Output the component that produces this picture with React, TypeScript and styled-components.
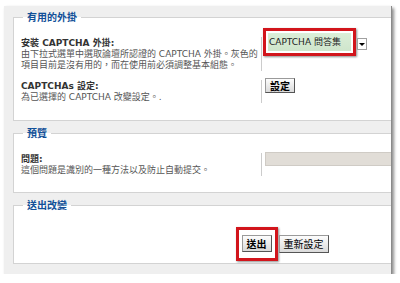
import React from 'react';
import styled, { createGlobalStyle } from 'styled-components';

const Global = createGlobalStyle`
  html, body { margin: 0; padding: 0; background: #fff; }
  body { font-family: "DejaVu Sans", "Noto Sans CJK TC", sans-serif; }
`;

const Frame = styled.div`
  box-sizing: border-box;
  margin: 6px 0 0 4px;
  width: 388px;
  height: 268px;
  padding-top: 5px;
  background: #efefef;
  border-right: 1px solid #8a8a8a;
  box-shadow: 2px 2px 3px rgba(0, 0, 0, 0.45);
  overflow: hidden;
`;

const Set = styled.fieldset<{ $pad: string }>`
  box-sizing: border-box;
  width: 538px;
  min-inline-size: 0;
  margin: 0 0 6px 9px;
  padding: ${p => p.$pad};
  border: 1px solid #d3d3d3;
  background: #fff;
`;

const Legend = styled.legend`
  margin-left: 2px;
  padding: 0 4px;
  font: bold 10px/12px "Noto Sans CJK TC", sans-serif;
  color: #115098;
`;

const Row = styled.div<{ $mt?: number }>`
  display: grid;
  grid-template-columns: 241px 1fr;
  align-items: start;
  padding: 4px 0;
  margin-top: ${p => p.$mt ?? 0}px;
`;

const Term = styled.div`
  box-sizing: border-box;
  border-right: 1px solid #cccccc;
`;

const Label = styled.div`
  font: bold 9px/12px "DejaVu Sans", "Noto Sans CJK TC", sans-serif;
  color: #333;
  white-space: nowrap;
`;

const Desc = styled.div`
  font: 9px/11px "DejaVu Sans", "Noto Sans CJK TC", sans-serif;
  color: #555;
  white-space: nowrap;
`;

const Def = styled.div`
  padding-left: 3px;
`;

const SelectWrap = styled.div`
  display: flex;
  align-items: flex-start;
  margin: -9px 0 0 -2px;
`;

const Mark = styled.div<{ $pad: string }>`
  display: inline-block;
  border: 3px solid #d2151c;
  padding: ${p => p.$pad};
  box-shadow: 1px 1px 2px rgba(0, 0, 0, 0.45);
`;

const Choice = styled.div`
  box-sizing: border-box;
  width: 83px;
  height: 18px;
  padding-left: 1px;
  background: linear-gradient(#dbeed8, #cfe5cc);
  font: 9px/18px "DejaVu Sans", "Noto Sans CJK TC", sans-serif;
  color: #222;
  white-space: nowrap;
`;

const Arrow = styled.div`
  box-sizing: border-box;
  width: 10px;
  height: 12px;
  margin: 10px 0 0 1px;
  border: 1px solid #a0a0a0;
  background: #fff;
  display: flex;
  align-items: center;
  justify-content: center;
  &::after {
    content: "";
    border-left: 3px solid transparent;
    border-right: 3px solid transparent;
    border-top: 3px solid #000;
  }
`;

const Btn = styled.button<{ $bold?: boolean; $h: number; $mt?: number }>`
  box-sizing: border-box;
  height: ${p => p.$h}px;
  margin: ${p => p.$mt ?? 0}px 0 0 0;
  padding: 0 4px;
  font: ${p => (p.$bold ? 'bold' : 'normal')} 10px/1 "Noto Sans CJK TC", sans-serif;
  color: #000;
  border: 1px solid;
  border-color: #9a9a9a #555 #555 #9a9a9a;
  background: linear-gradient(#fdfdfd, #dadada);
  display: block;
`;

const Field = styled.input`
  box-sizing: border-box;
  display: block;
  width: 260px;
  height: 14px;
  margin-top: -1px;
  border: 1px solid #cfcbc5;
  background: #e1ddd7;
`;

const Actions = styled.div`
  display: flex;
  justify-content: center;
  align-items: center;
  gap: 1px;
`;

export default function App() {
  return (
    <>
      <Global />
      <Frame>
        <Set $pad="10px 7px 13px">
          <Legend>有用的外掛</Legend>
          <Row>
            <Term>
              <Label>安裝 CAPTCHA 外掛:</Label>
              <Desc>
                由下拉式選單中選取論壇所認證的 CAPTCHA 外掛。灰色的
                <br />
                項目目前是沒有用的，而在使用前必須調整基本組態。
              </Desc>
            </Term>
            <Def>
              <SelectWrap>
                <Mark $pad="2px">
                  <Choice>CAPTCHA 問答集</Choice>
                </Mark>
                <Arrow />
              </SelectWrap>
            </Def>
          </Row>
          <Row $mt={1}>
            <Term>
              <Label>CAPTCHAs 設定:</Label>
              <Desc>為已選擇的 CAPTCHA 改變設定。.</Desc>
            </Term>
            <Def>
              <Btn $bold $h={15} $mt={-2}>設定</Btn>
            </Def>
          </Row>
        </Set>
        <Set $pad="10px 7px 12px">
          <Legend>預覽</Legend>
          <Row>
            <Term>
              <Label>問題:</Label>
              <Desc>這個問題是識別的一種方法以及防止自動提交。</Desc>
            </Term>
            <Def>
              <Field readOnly />
            </Def>
          </Row>
        </Set>
        <Set $pad="16px 7px 2px">
          <Legend>送出改變</Legend>
          <Actions>
            <Mark $pad="5px 3px 6px">
              <Btn $bold $h={17}>送出</Btn>
            </Mark>
            <Btn $h={18}>重新設定</Btn>
          </Actions>
        </Set>
      </Frame>
    </>
  );
}
